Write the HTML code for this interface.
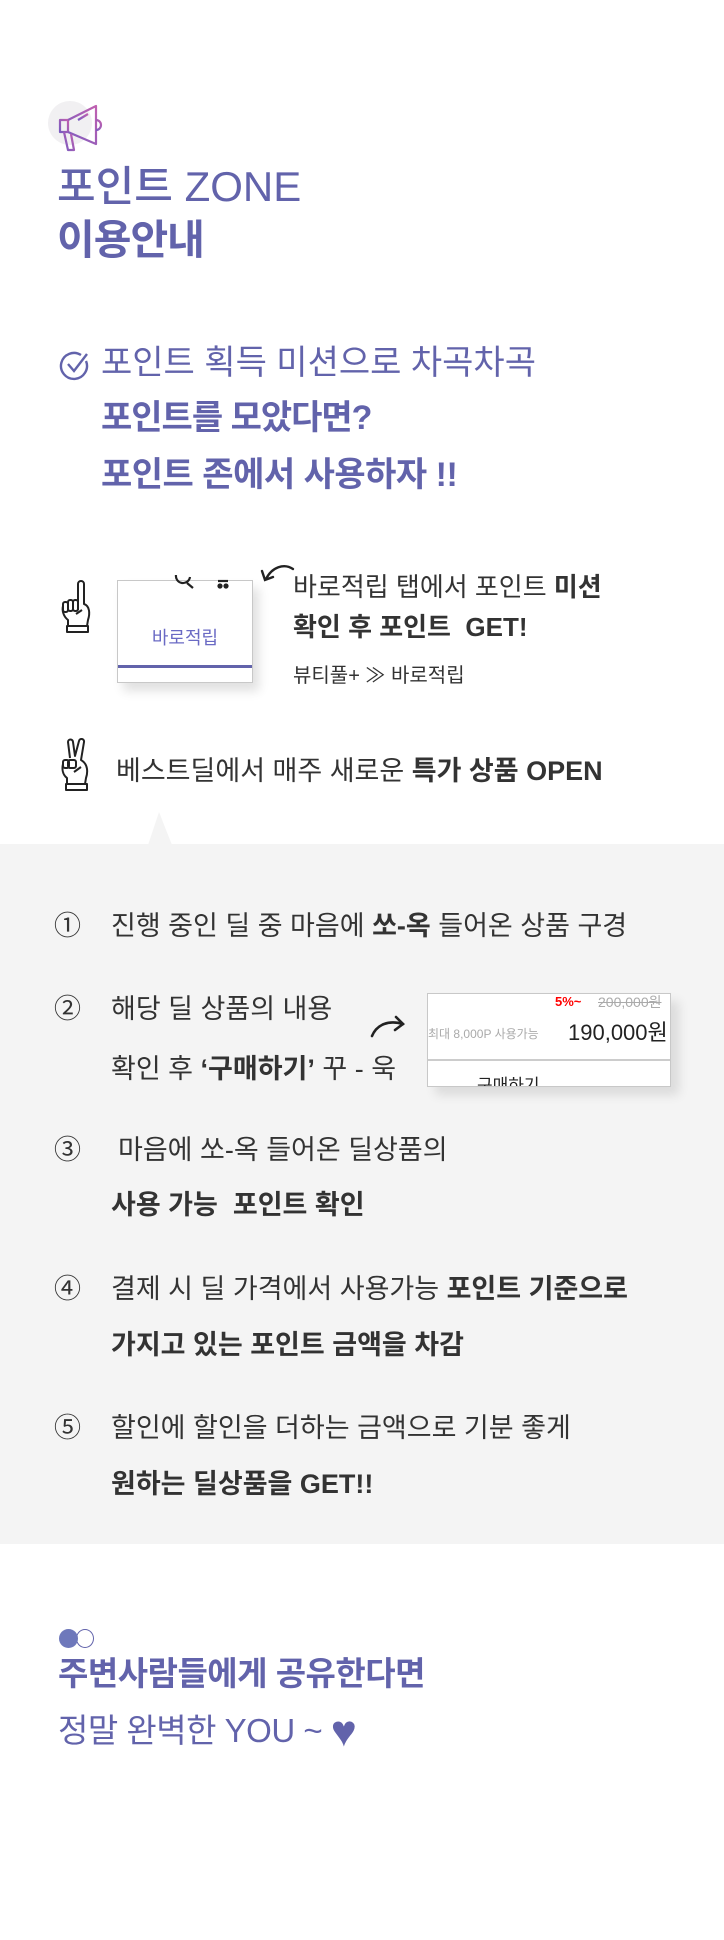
<!DOCTYPE html>
<html><head><meta charset="utf-8">
<style>
*{margin:0;padding:0;box-sizing:border-box}
html,body{width:724px;height:1940px;background:#fff;overflow:hidden}
body{position:relative;font-family:"Liberation Sans","Noto Sans CJK KR",sans-serif;color:#333}
.a{position:absolute;white-space:nowrap;line-height:1}
.p{color:#6263ab}
b{font-weight:700}
</style></head><body>

<div class="a" style="left:48px;top:101px;width:44px;height:44px;border-radius:50%;background:#f1f0f2"></div>
<svg class="a" style="left:56px;top:104px" width="50" height="50" viewBox="0 0 50 50">
<defs><linearGradient id="g" x1="0" y1="1" x2="1" y2="0"><stop offset="0" stop-color="#7a5cc0"/><stop offset="1" stop-color="#c060b0"/></linearGradient></defs>
<g fill="none" stroke="url(#g)" stroke-width="2.2" stroke-linejoin="round">
<rect x="4" y="16" width="8" height="12"/>
<path d="M12 16 L40 2 L40 40 L12 28"/>
<path d="M8 28 L12 46 L18 46 L15 30"/>
<path d="M40 16 a5 5 0 0 1 0 10"/>
<path d="M22 16 L32 10"/>
</g></svg>

<div class="a p" style="left:57px;top:166px;font-size:42px;font-weight:500;letter-spacing:0">포인트 ZONE</div>
<div class="a p" style="left:57px;top:220px;font-size:41px;font-weight:700;letter-spacing:-1px">이용안내</div>

<svg class="a" style="left:59px;top:350px" width="31" height="31" viewBox="0 0 31 31"><g fill="none" stroke="#6263ab" stroke-width="2.4"><path d="M27 11 A13 13 0 1 1 22 5"/><path d="M9 14 L15 21 L28 4"/></g></svg>
<div class="a p" style="left:101px;top:346px;font-size:34px">포인트 획득 미션으로 차곡차곡</div>
<div class="a p" style="left:101px;top:401px;font-size:34px;font-weight:700;letter-spacing:-1px">포인트를 모았다면?</div>
<div class="a p" style="left:101px;top:458px;font-size:34px;font-weight:700;letter-spacing:-0.5px">포인트 존에서 사용하자 !!</div>

<svg class="a" style="left:60px;top:580px" width="34" height="54" viewBox="0 0 34 54"><g fill="none" stroke="#222" stroke-width="2" stroke-linejoin="round"><path d="M18 30 L18 4 a3 3 0 0 1 6 0 L24 24 C30 26 30 34 28 40 L27 46 L8 46 L8 40 C3 36 2 30 3 26"/><rect x="3" y="22" width="5" height="10" rx="2"/><rect x="8" y="20" width="5" height="11" rx="2"/><rect x="13" y="20" width="5" height="11" rx="2"/><path d="M16 34 L22 30"/><rect x="7" y="46" width="21" height="6"/></g></svg>

<div class="a" style="left:117px;top:580px;width:136px;height:103px;border:1px solid #c8c8c8;background:#fff;box-shadow:6px 8px 10px rgba(0,0,0,.12)">
<svg style="position:absolute;left:56px;top:-6px" width="60" height="20" viewBox="0 0 60 20"><g fill="none" stroke="#222" stroke-width="2.2"><path d="M2 0 a7 7 0 0 0 14 2 M13 8 L19 13"/><path d="M44 6 L54 6"/><circle cx="46" cy="11" r="1.5" fill="#222"/><circle cx="52" cy="11" r="1.5" fill="#222"/></g></svg>
<div class="a" style="left:0;width:134px;text-align:center;top:48px;font-size:18px;color:#6a6ac4">바로적립</div>
<div style="position:absolute;left:0;right:0;top:84px;height:3px;background:#6263ab"></div>
</div>
<svg class="a" style="left:258px;top:563px" width="38" height="22" viewBox="0 0 38 22"><g fill="none" stroke="#222" stroke-width="2.4" stroke-linecap="round"><path d="M35 6 C26 0 14 4 8 16"/><path d="M4 8 L7 17 L15 14"/></g></svg>
<div class="a" style="left:293px;top:574px;font-size:26px">바로적립 탭에서 포인트 <b>미션</b></div>
<div class="a" style="left:293px;top:614px;font-size:26px;font-weight:700">확인 후 포인트&nbsp; GET!</div>
<div class="a" style="left:293px;top:666px;font-size:20px">뷰티풀+ ≫ 바로적립</div>

<svg class="a" style="left:60px;top:738px" width="32" height="54" viewBox="0 0 32 54"><g fill="none" stroke="#222" stroke-width="2" stroke-linejoin="round"><path d="M10 20 L8 4 a2.5 2.5 0 0 1 5 0 L15 18 L19 3 a2.5 2.5 0 0 1 5 1 L21 22 C28 26 28 34 26 40 L25 46 L7 46 L7 40 C2 36 2 30 3 26"/><rect x="3" y="22" width="6" height="8" rx="2"/><rect x="8" y="22" width="8" height="8" rx="2"/><path d="M14 34 L21 29"/><rect x="6" y="46" width="21" height="6"/></g></svg>
<div class="a" style="left:116px;top:758px;font-size:27px">베스트딜에서 매주 새로운 <b>특가 상품 OPEN</b></div>

<svg class="a" style="left:146px;top:812px" width="28" height="33" viewBox="0 0 28 33"><path d="M13 0 L2 33 L26 33 Z" fill="#f4f4f4"/></svg>
<div class="a" style="left:0;top:844px;width:724px;height:700px;background:#f4f4f4"></div>

<div class="a" style="left:54px;top:913px;font-size:27px">①</div>
<div class="a" style="left:111px;top:913px;font-size:27px">진행 중인 딜 중 마음에 <b>쏘-옥</b> 들어온 상품 구경</div>

<div class="a" style="left:54px;top:996px;font-size:27px">②</div>
<div class="a" style="left:111px;top:996px;font-size:27px">해당 딜 상품의 내용</div>
<div class="a" style="left:111px;top:1056px;font-size:27px">확인 후 <b>‘구매하기’</b> 꾸 - 욱</div>
<svg class="a" style="left:369px;top:1014px" width="38" height="24" viewBox="0 0 38 24"><g fill="none" stroke="#222" stroke-width="2.6" stroke-linecap="round"><path d="M3 22 C8 10 20 6 34 10"/><path d="M27 3 L34 10 L26 16"/></g></svg>
<div class="a" style="left:427px;top:993px;width:244px;height:94px;border:1px solid #c8c8c8;background:#fff;box-shadow:8px 8px 10px rgba(0,0,0,.1);overflow:hidden">
<div class="a" style="left:127px;top:1px;font-size:13px;color:#f00;font-weight:700">5%~</div>
<div class="a" style="left:170px;top:1px;font-size:14px;color:#aaa;text-decoration:line-through">200,000원</div>
<div class="a" style="left:0;top:34px;font-size:12px;color:#aaa">최대 8,000P 사용가능</div>
<div class="a" style="left:140px;top:28px;font-size:22px;color:#222">190,000원</div>
<div style="position:absolute;left:0;right:0;top:65px;height:2px;background:#ccc"></div>
<div class="a" style="left:49px;top:83px;font-size:17px;color:#222">구매하기</div>
</div>

<div class="a" style="left:54px;top:1137px;font-size:27px">③</div>
<div class="a" style="left:118px;top:1137px;font-size:27px">마음에 쏘-옥 들어온 딜상품의</div>
<div class="a" style="left:111px;top:1192px;font-size:27px;font-weight:700">사용 가능&nbsp; 포인트 확인</div>

<div class="a" style="left:54px;top:1276px;font-size:27px">④</div>
<div class="a" style="left:111px;top:1276px;font-size:27px">결제 시 딜 가격에서 사용가능 <b>포인트 기준으로</b></div>
<div class="a" style="left:111px;top:1332px;font-size:27px;font-weight:700">가지고 있는 포인트 금액을 차감</div>

<div class="a" style="left:54px;top:1415px;font-size:27px">⑤</div>
<div class="a" style="left:111px;top:1415px;font-size:27px">할인에 할인을 더하는 금액으로 기분 좋게</div>
<div class="a" style="left:111px;top:1471px;font-size:27px;font-weight:700">원하는 딜상품을 GET!!</div>

<div class="a" style="left:76px;top:1629px;width:18px;height:19px;border-radius:50%;border:1.5px solid #6263ab;background:#fff"></div>
<div class="a" style="left:59px;top:1629px;width:19px;height:19px;border-radius:50%;background:#6e78bb"></div>
<div class="a p" style="left:58px;top:1657px;font-size:33px;font-weight:700;letter-spacing:-0.5px">주변사람들에게 공유한다면</div>
<div class="a p" style="left:58px;top:1706px;font-size:33px;letter-spacing:-0.5px">정말 완벽한 YOU ~ <span style="font-size:44px;position:relative;top:4px">♥</span></div>

</body></html>
